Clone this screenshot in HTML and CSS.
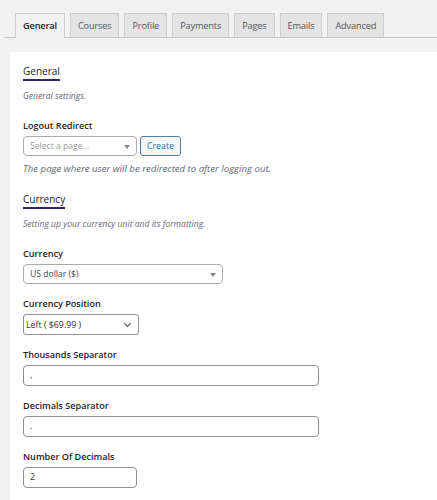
FILE: index.html
```html
<!DOCTYPE html>
<html>
<head>
<meta charset="utf-8">
<link rel="stylesheet" href="styles.css">
</head>
<body>
<nav class="tabs">
  <a class="tab active">General</a>
  <a class="tab">Courses</a>
  <a class="tab">Profile</a>
  <a class="tab">Payments</a>
  <a class="tab">Pages</a>
  <a class="tab">Emails</a>
  <a class="tab">Advanced</a>
</nav>
<main class="panel">
  <h2 class="section-title"><span>General</span></h2>
  <p class="section-desc">General settings.</p>

  <div class="field">
    <label class="label">Logout Redirect</label>
    <div class="row">
      <div class="s2 s2-page"><span class="s2-placeholder">Select a page...</span><span class="s2-arrow"></span></div>
      <button class="btn">Create</button>
    </div>
    <p class="help">The page where user will be redirected to after logging out.</p>
  </div>

  <h2 class="section-title"><span>Currency</span></h2>
  <p class="section-desc">Setting up your currency unit and its formatting.</p>

  <div class="field">
    <label class="label">Currency</label>
    <div class="s2 s2-currency"><span class="s2-value">US dollar ($)</span><span class="s2-arrow"></span></div>
  </div>

  <div class="field">
    <label class="label">Currency Position</label>
    <div class="native-select"><span>Left ( $69.99 )</span>
      <svg class="chev" width="9" height="6" viewBox="0 0 9 6"><path d="M1.2 1.2 L4.5 4.5 L7.8 1.2" fill="none" stroke="#50575e" stroke-width="1.1"/></svg>
    </div>
  </div>

  <div class="field">
    <label class="label">Thousands Separator</label>
    <div class="input wide">,</div>
  </div>

  <div class="field">
    <label class="label">Decimals Separator</label>
    <div class="input wide">.</div>
  </div>

  <div class="field">
    <label class="label">Number Of Decimals</label>
    <div class="input short">2</div>
  </div>

  <hr class="sep">
</main>
</body>
</html>
```

FILE: styles.css
```css
html, body {
  margin: 0;
  padding: 0;
  background: #f1f1f1;
  font-family: "Open Sans", "Noto Sans", sans-serif;
  color: #1d2327;
  overflow: hidden;
}

.tabs {
  display: flex;
  gap: 5px;
  padding: 13px 0 0 15px;
  margin-left: 4px;
  border-bottom: 1px solid #c8c8c8;
  height: 24px;
}

.tab {
  display: block;
  box-sizing: border-box;
  height: 24px;
  padding: 0 7px;
  line-height: 23px;
  font-size: 9.2px;
  font-weight: 500;
  letter-spacing: -0.15px;
  color: #50575e;
  background: #e4e4e4;
  border: 1px solid #cdcdcd;
  border-bottom: none;
}

.tab:first-child { margin-left: -4px; }

.tab.active {
  background: #f1f1f1;
  color: #1d2327;
  font-weight: 600;
  height: 25px;
  margin-bottom: -1px;
}

.panel {
  margin: 14px 0 0 10px;
  background: #fff;
  padding: 12px 0 0 13px;
  min-height: 460px;
}

.section-title {
  margin: 0;
  font-size: 10px;
  font-weight: 500;
  line-height: 14px;
}

.section-title span {
  display: inline-block;
  border-bottom: 2px solid #32256a;
  padding-bottom: 1px;
}

.section-desc {
  margin: 9px 0 0;
  font-size: 8.6px;
  font-style: italic;
  color: #646970;
  line-height: 12px;
}

.field {
  margin-top: 17px;
}

.field + .field {
  margin-top: 13px;
}

.label {
  display: block;
  font-size: 9.1px;
  font-weight: 600;
  line-height: 14px;
  margin-bottom: 3px;
}

.row {
  display: flex;
  gap: 3px;
  align-items: center;
}

.s2 {
  position: relative;
  box-sizing: border-box;
  height: 20px;
  border: 1px solid #aaa;
  border-radius: 4px;
  background: #fff;
  font-size: 8.6px;
  line-height: 18px;
  padding-left: 6px;
}

.s2-page { width: 114px; }
.s2-currency { width: 200px; }

.s2-placeholder { color: #999; }
.s2-value { color: #444; }

.s2-arrow {
  position: absolute;
  right: 6px;
  top: 8px;
  border-left: 3px solid transparent;
  border-right: 3px solid transparent;
  border-top: 4px solid #888;
}

.btn {
  box-sizing: border-box;
  height: 20px;
  width: 41px;
  padding: 0;
  font-family: inherit;
  font-size: 8.8px;
  color: #2271b1;
  background: #f6f7f7;
  border: 1px solid #4f7fa8;
  border-radius: 3px;
}

.help {
  margin: 7px 0 17px;
  font-size: 9.6px;
  font-style: italic;
  color: #646970;
  line-height: 12px;
}

.native-select {
  box-sizing: border-box;
  width: 116px;
  height: 21px;
  border: 1px solid #8c8f94;
  border-radius: 3px;
  display: flex;
  align-items: center;
  justify-content: space-between;
  padding: 0 6px 0 2px;
  font-size: 8.8px;
  color: #2c3338;
}

.input {
  box-sizing: border-box;
  height: 21px;
  border: 1px solid #8c8f94;
  border-radius: 4px;
  padding: 0 6px;
  font-size: 8.8px;
  line-height: 19px;
  color: #2c3338;
}

.input.wide { width: 296px; }
.input.short { width: 114px; }

.sep {
  margin: 12px 0 0;
  border: 0;
  border-top: 1px solid #dcdcde;
}
```
